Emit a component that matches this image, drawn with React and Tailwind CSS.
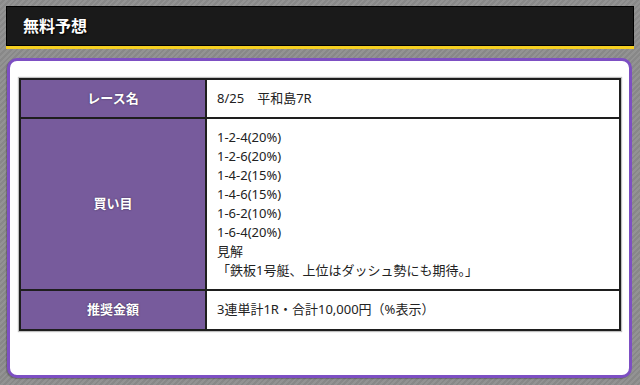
const picks = [
  "1-2-4(20%)",
  "1-2-6(20%)",
  "1-4-2(15%)",
  "1-4-6(15%)",
  "1-6-2(10%)",
  "1-6-4(20%)",
];

// 表の1行
function Row({ label, children, last }) {
  return (
    <tr className={last ? "" : "border-b-2 border-[#1e1e1e]"}>
      <th className="w-[186px] bg-[#775b9c] border-r-2 border-[#1e1e1e] text-white text-[13px] font-bold text-center align-middle [text-shadow:0_0_2px_rgba(0,0,0,0.5)]">
        {label}
      </th>
      <td className="bg-white text-[#222] text-[13px] px-[10px] align-middle">{children}</td>
    </tr>
  );
}

export default function App() {
  return (
    <div
      className="h-[385px] w-[640px] overflow-hidden px-[6px] pt-[6px] bg-[#8f8f8f] bg-[repeating-linear-gradient(135deg,#939393_0px,#939393_2px,#888888_2px,#888888_4px)]"
      style={{ fontFamily: '"Noto Sans", "Noto Sans CJK JP", sans-serif' }}
    >
      {/* Header */}
      <div className="h-[43px] border-b-[3px] border-[#f5cf22]">
        <div className="h-[40px] bg-[#1a1a1a] border border-black flex items-center px-[16px]">
          <h1 className="text-white text-[16px] font-bold [text-shadow:1px_1px_2px_#000]">無料予想</h1>
        </div>
      </div>

      {/* Card */}
      <div className="mt-[9px] ml-[1px] mr-[2px] h-[320px] bg-white border-[3px] border-[#7d4fc3] rounded-[10px] shadow-[-1px_1px_1px_rgba(0,0,0,0.25)] pt-[17px] pl-[9px] pr-[8px]">
        <table className="w-full border-collapse border-2 border-[#1e1e1e] shadow-[0_0_1px_1px_rgba(0,0,0,0.25)]">
          <tbody>
            <Row label="レース名">
              <div className="h-[37px] flex items-center">8/25　平和島7R</div>
            </Row>
            <Row label="買い目">
              <div className="py-[9px] leading-[19px]">
                {picks.map((p) => (
                  <div key={p}>{p}</div>
                ))}
                <div>見解</div>
                <div>「鉄板1号艇、上位はダッシュ勢にも期待。」</div>
              </div>
            </Row>
            <Row label="推奨金額" last>
              <div className="h-[38px] flex items-center">3連単計1R・合計10,000円（%表示）</div>
            </Row>
          </tbody>
        </table>
      </div>
    </div>
  );
}
